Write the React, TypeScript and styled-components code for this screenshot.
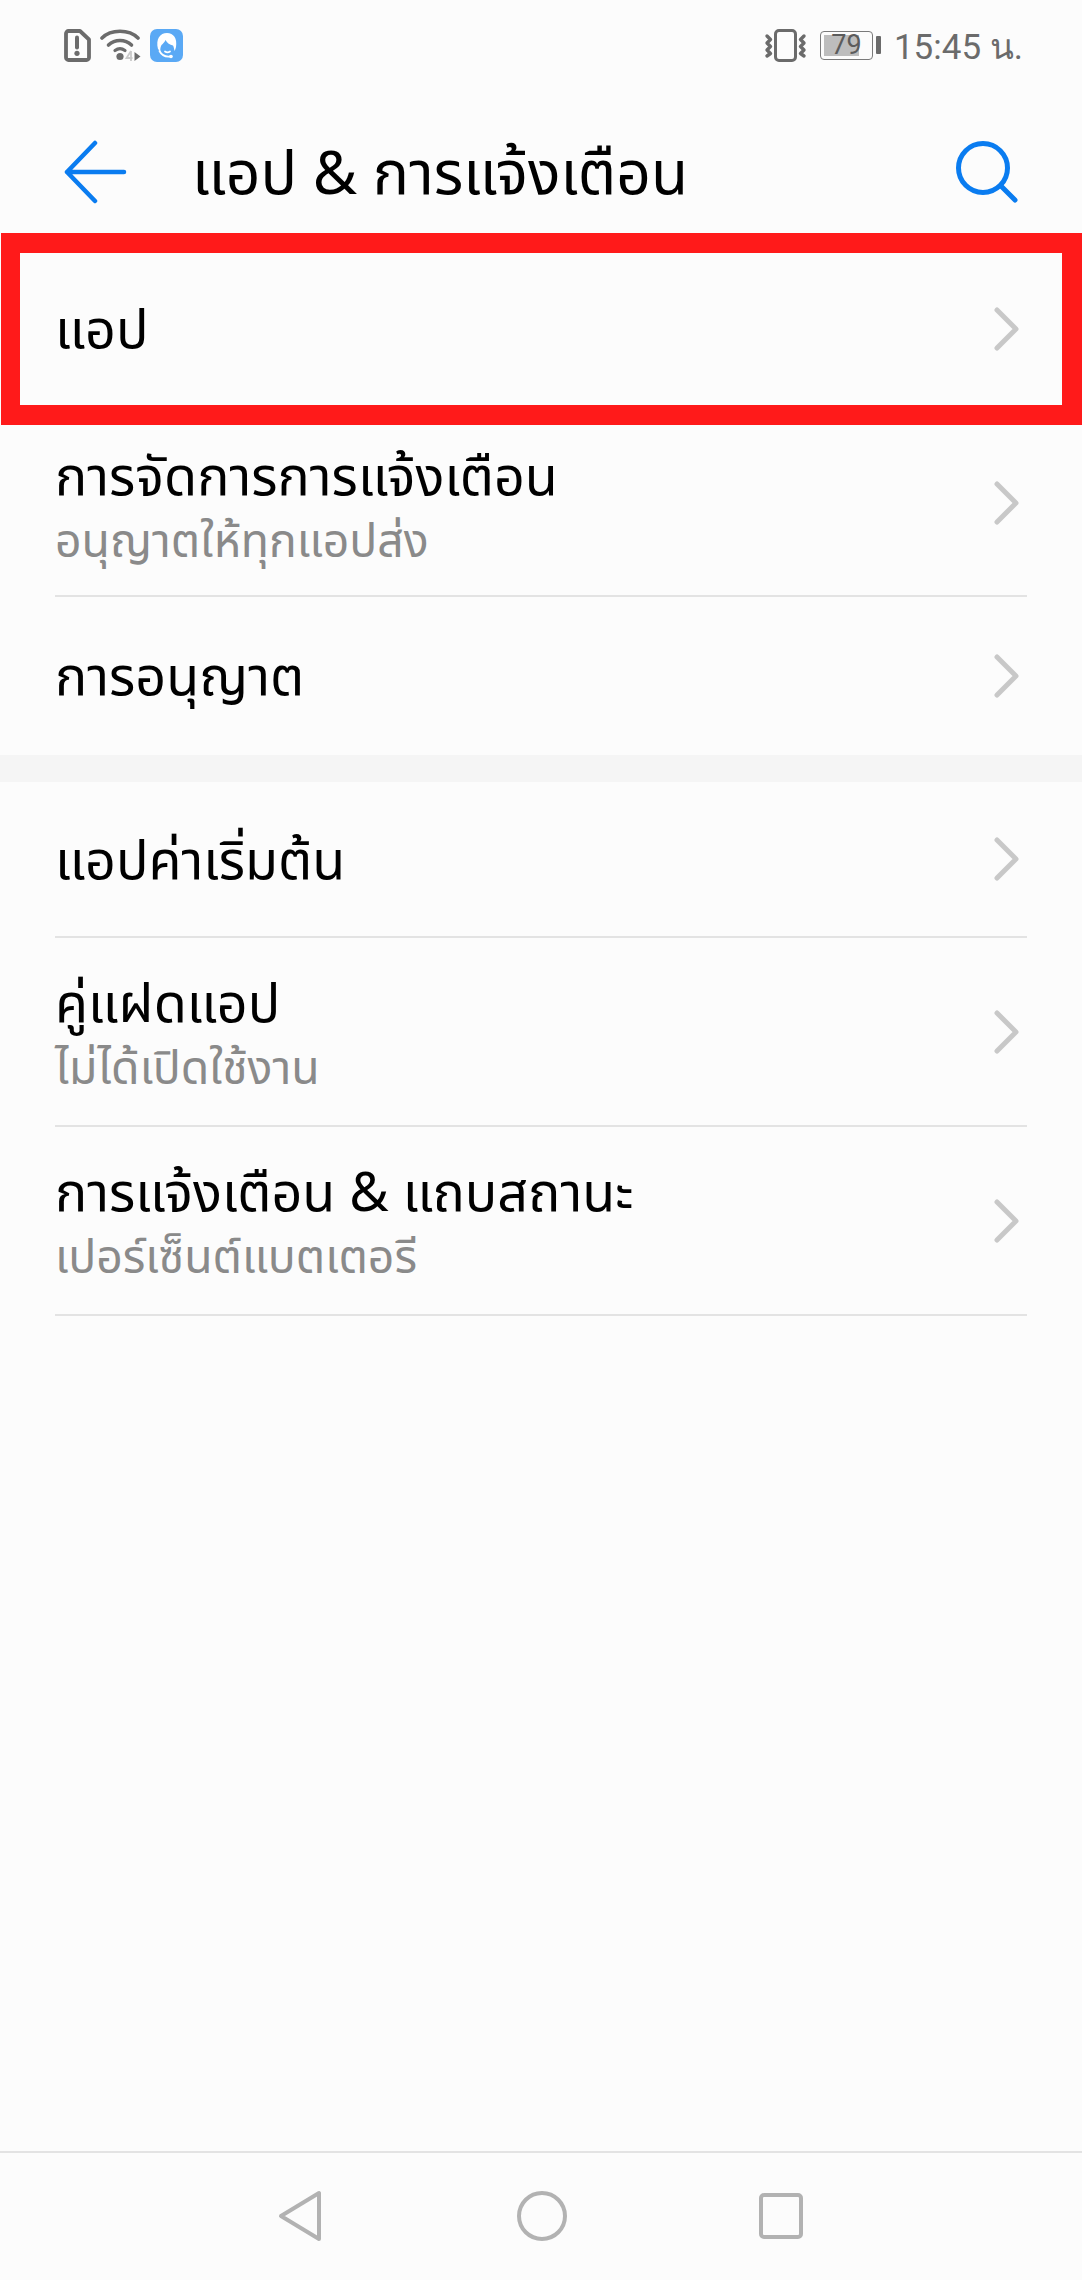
import React, { FC } from 'react'
import styled, { createGlobalStyle } from 'styled-components'

const GlobalStyle = createGlobalStyle`
  html, body {
    margin: 0;
    padding: 0;
    background: #fcfcfc;
  }
  * {
    box-sizing: border-box;
  }
`

const Page = styled.div`
  width: 1082px;
  height: 2280px;
  display: flex;
  flex-direction: column;
  background: #fcfcfc;
  font-family: 'Noto Sans Thai', 'Noto Sans', 'Roboto', sans-serif;
  color: #000;
  overflow: hidden;
`

const StatusBar = styled.div`
  height: 90px;
  padding: 28px 59px 0 64px;
  display: flex;
  justify-content: space-between;
  align-items: flex-start;
`

const LeftIcons = styled.div`
  display: flex;
  align-items: center;
  gap: 9px;
`

const RightIcons = styled.div`
  display: flex;
  align-items: center;
  gap: 13px;
`

const Clock = styled.span`
  font-family: 'Roboto', 'Noto Sans', sans-serif;
  font-size: 35px;
  line-height: 34px;
  margin: 3px 0 -3px;
  color: #6b6b6b;
`

const AppBar = styled.div`
  height: 143px;
  padding: 21px 64px 0 64px;
  display: flex;
  align-items: center;
`

const Title = styled.div`
  flex: 1;
  margin-left: 64px;
  padding-top: 8px;
  font-size: 60.5px;
  line-height: 70px;
`

const Row = styled.div<{ $height: number; $divider?: boolean }>`
  height: ${(p) => p.$height}px;
  margin: 0 55px;
  display: flex;
  align-items: center;
  justify-content: space-between;
  padding-right: 8px;
  border-bottom: ${(p) => (p.$divider ? '2px solid #e3e3e3' : 'none')};
`

const HighlightRow = styled.div`
  height: 192px;
  margin-left: 1px;
  padding: 0 43px 0 35px;
  display: flex;
  align-items: center;
  justify-content: space-between;
  border: solid #ff1a1a;
  border-width: 20px 20px 20px 19px;
`

const RowText = styled.div<{ $top: number }>`
  display: flex;
  flex-direction: column;
  padding-top: ${(p) => p.$top}px;
`

const RowTitle = styled.div`
  font-size: 53.8px;
  line-height: 66px;
`

const RowSub = styled.div`
  font-size: 46.3px;
  line-height: 62px;
  color: #8a8a8a;
`

const GroupGap = styled.div`
  height: 27px;
  background: #f5f5f5;
`

const Spacer = styled.div`
  flex: 1;
`

const NavBar = styled.div`
  height: 129px;
  border-top: 2px solid #e3e3e3;
  display: flex;
  align-items: center;
  justify-content: space-between;
  padding: 0 279px 2px 278px;
`

const ChevronSlot = styled.div<{ $lift?: number }>`
  display: flex;
  margin-bottom: ${(p) => p.$lift ?? 0}px;
`

const Chevron: FC<{ lift?: number }> = ({ lift }) => (
  <ChevronSlot $lift={lift}>
    <svg width="26" height="44" viewBox="0 0 26 44" fill="none">
      <path d="M4 3l19 19L4 41" stroke="#c8c8c8" strokeWidth="5" strokeLinecap="round" strokeLinejoin="round" />
    </svg>
  </ChevronSlot>
)

const SimAlert: FC = () => (
  <svg width="27" height="33" viewBox="0 0 27 33" fill="none">
    <path d="M4.500 2h11.500L25 10.500v18a2.500 2.500 0 0 1-2.500 2.500h-18A2.500 2.500 0 0 1 2 28.500v-24A2.500 2.500 0 0 1 4.500 2z" stroke="#6b6b6b" strokeWidth="3.800" strokeLinejoin="round" />
    <path d="M13 8.500v10" stroke="#6b6b6b" strokeWidth="4" strokeLinecap="round" />
    <circle cx="13" cy="24.300" r="2.600" fill="#6b6b6b" />
  </svg>
)

const Wifi: FC = () => (
  <svg width="41" height="34" viewBox="0 0 41 34" fill="none">
    <path d="M2 10C11 1 29 1 38 10" stroke="#6b6b6b" strokeWidth="3.600" strokeLinecap="round" />
    <path d="M8.500 17c6.500-6 16.500-6 23 0" stroke="#6b6b6b" strokeWidth="3.600" strokeLinecap="round" />
    <path d="M15 22.500c3-2.300 7-2.300 10 0" stroke="#6b6b6b" strokeWidth="3.200" strokeLinecap="round" />
    <circle cx="20" cy="28.500" r="3.600" fill="#6b6b6b" />
    <path d="M31 23v10M31 23l-4.500 7h6" stroke="#c9c9c9" strokeWidth="1.800" />
    <path d="M34.500 24l6 4.500-6 4.500z" fill="#6b6b6b" />
  </svg>
)

const SupportBadge: FC = () => (
  <svg width="33" height="33" viewBox="0 0 33 33" fill="none">
    <rect width="33" height="33" rx="7" fill="#5aa9f5" />
    <path d="M8 20C5.500 10 10 4 17 4c6.500 0 10.500 5.500 9 14-.5 2-1 3-1.500 4-.5-3-1-4.500-1.500-5.500-3-.5-6-2.500-7.500-5.500-1 2.500-3 4-4 5-1 2-1.500 4-1 6.500z" fill="#fff" />
    <path d="M15 22.500c1.500 1 3.500 1 5 0" stroke="#fff" strokeWidth="1.800" strokeLinecap="round" />
    <path d="M9.500 22c2 4 6 6 10.500 5.500" stroke="#fff" strokeWidth="1.800" strokeLinecap="round" />
    <circle cx="21" cy="27.500" r="1.800" fill="#fff" />
  </svg>
)

const Vibrate: FC = () => (
  <svg width="43" height="33" viewBox="0 0 43 33" fill="none">
    <rect x="11.500" y="1.500" width="20" height="30" rx="3.500" stroke="#6b6b6b" strokeWidth="3" />
    <path d="M3 7l3.500 3.500L3 14l3.500 3.500L3 21l3.500 3.500L3 27" stroke="#6b6b6b" strokeWidth="3.400" strokeLinecap="round" strokeLinejoin="round" />
    <path d="M40 7l-3.500 3.500L40 14l-3.500 3.500L40 21l-3.500 3.500L40 27" stroke="#6b6b6b" strokeWidth="3.400" strokeLinecap="round" strokeLinejoin="round" />
  </svg>
)

const BatteryWrap = styled.div`
  display: flex;
  align-items: center;
  gap: 3px;
`

const BatteryBody = styled.div`
  position: relative;
  width: 53px;
  height: 29px;
  border: 1.5px solid #7a7a7a;
  border-radius: 4px;
  padding: 3px;
`

const BatteryFill = styled.div`
  height: 100%;
  background: #bdbdbd;
`

const BatteryLabel = styled.span`
  position: absolute;
  inset: 0;
  text-align: center;
  font-family: 'Roboto', sans-serif;
  font-size: 27px;
  line-height: 26px;
  color: #5c5c5c;
`

const BatteryTip = styled.div`
  width: 5px;
  height: 18px;
  background: #6b6b6b;
  border-radius: 1px;
`

const Battery: FC<{ level: number }> = ({ level }) => (
  <BatteryWrap>
    <BatteryBody>
      <BatteryFill style={{ width: `${level}%` }} />
      <BatteryLabel>{level}</BatteryLabel>
    </BatteryBody>
    <BatteryTip />
  </BatteryWrap>
)

type Item = { title: string; sub?: string; height: number; divider?: boolean; top: number; lift?: number }

const items: Item[] = [
  { title: 'การจัดการการแจ้งเตือน', sub: 'อนุญาตให้ทุกแอปส่ง', height: 172, divider: true, top: 0, lift: 14 },
  { title: 'การอนุญาต', height: 158, top: 6 },
]

const items2: Item[] = [
  { title: 'แอปค่าเริ่มต้น', height: 156, divider: true, top: 8 },
  { title: 'คู่แฝดแอป', sub: 'ไม่ได้เปิดใช้งาน', height: 189, divider: true, top: 10 },
  { title: 'การแจ้งเตือน & แถบสถานะ', sub: 'เปอร์เซ็นต์แบตเตอรี', height: 189, divider: true, top: 10 },
]

const SettingRow: FC<{ item: Item }> = ({ item }) => (
  <Row $height={item.height} $divider={item.divider}>
    <RowText $top={item.top}>
      <RowTitle>{item.title}</RowTitle>
      {item.sub && <RowSub>{item.sub}</RowSub>}
    </RowText>
    <Chevron lift={item.lift} />
  </Row>
)

const App: FC = () => {
  return (
    <Page>
      <GlobalStyle />
      <StatusBar>
        <LeftIcons>
          <SimAlert />
          <Wifi />
          <SupportBadge />
        </LeftIcons>
        <RightIcons>
          <Vibrate />
          <Battery level={79} />
          <Clock>15:45 น.</Clock>
        </RightIcons>
      </StatusBar>
      <AppBar>
        <svg width="64" height="64" viewBox="0 0 64 64" fill="none">
          <path d="M31 3L3 32l28 29M3 32h57" stroke="#0a7cf0" strokeWidth="4.500" strokeLinecap="round" strokeLinejoin="round" />
        </svg>
        <Title>แอป &amp; การแจ้งเตือน</Title>
        <svg width="62" height="62" viewBox="0 0 62 62" fill="none">
          <circle cx="27" cy="27" r="24.500" stroke="#0a7cf0" strokeWidth="5" />
          <path d="M45 45l14 14" stroke="#0a7cf0" strokeWidth="5" strokeLinecap="round" />
        </svg>
      </AppBar>
      <HighlightRow>
        <RowText $top={6}>
          <RowTitle>แอป</RowTitle>
        </RowText>
        <Chevron />
      </HighlightRow>
      {items.map((item) => (
        <SettingRow key={item.title} item={item} />
      ))}
      <GroupGap />
      {items2.map((item) => (
        <SettingRow key={item.title} item={item} />
      ))}
      <Spacer />
      <NavBar>
        <svg width="46" height="52" viewBox="0 0 46 52" fill="none">
          <path d="M3 26L41 3v46z" stroke="#b2b2b2" strokeWidth="4" strokeLinejoin="round" />
        </svg>
        <svg width="50" height="50" viewBox="0 0 50 50" fill="none">
          <circle cx="25" cy="25" r="23" stroke="#b2b2b2" strokeWidth="4" />
        </svg>
        <svg width="44" height="46" viewBox="0 0 44 46" fill="none">
          <rect x="2" y="2" width="40" height="42" rx="3" stroke="#b2b2b2" strokeWidth="4" />
        </svg>
      </NavBar>
    </Page>
  )
}

export default App
